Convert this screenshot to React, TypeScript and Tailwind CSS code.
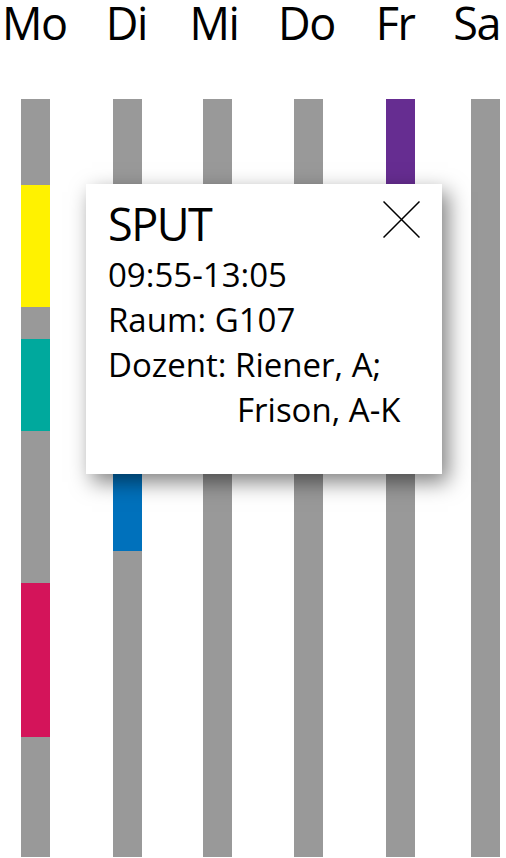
import React from "react";

type Seg = { top: number; height: number; color: string };
type Day = { ml: string; segs: Seg[] };

const labels = [
  { t: "Mo", ml: "ml-[2px]" },
  { t: "Di", ml: "ml-[35px]" },
  { t: "Mi", ml: "ml-[29px]" },
  { t: "Do", ml: "ml-[34px]" },
  { t: "Fr", ml: "ml-[30px]" },
  { t: "Sa", ml: "ml-[23px]" },
];

const days: Day[] = [
  {
    ml: "ml-[21px]",
    segs: [
      { top: 86, height: 122, color: "#FFF200" },
      { top: 240, height: 92, color: "#00A99D" },
      { top: 484, height: 154, color: "#D4145A" },
    ],
  },
  { ml: "ml-[63px]", segs: [{ top: 160, height: 292, color: "#0071BC" }] },
  { ml: "ml-[61px]", segs: [] },
  { ml: "ml-[62px]", segs: [] },
  { ml: "ml-[63px]", segs: [{ top: 0, height: 86, color: "#662D91" }] },
  { ml: "ml-[56px]", segs: [] },
];

export default function App() {
  return (
    <div
      className="relative w-[506px] h-[858px] bg-white overflow-hidden text-black"
      style={{ fontFamily: '"Open Sans", "Noto Sans", sans-serif' }}
    >
      <div className="flex h-[46px]">
        {labels.map((l) => (
          <div
            key={l.t}
            className={`${l.ml} w-[60px] text-center whitespace-nowrap text-[45px] leading-[46px] tracking-[-1.5px]`}
          >
            {l.t}
          </div>
        ))}
      </div>
      <div className="flex mt-[53px]">
        {days.map((d, idx) => (
          <div key={idx} className={`${d.ml} relative w-[29px] h-[758px] bg-[#999999]`}>
            {d.segs.map((s, i) => (
              <div
                key={i}
                className="absolute left-0 w-full"
                style={{ top: s.top, height: s.height, background: s.color }}
              />
            ))}
          </div>
        ))}
      </div>

      <div className="absolute left-[86px] top-[184px] w-[356px] h-[290px] bg-white shadow-[6px_8px_20px_rgba(0,0,0,0.5)] pl-[22px] pt-[15px]">
        <div className="text-[45px] leading-[50px] tracking-[-1.5px]">SPUT</div>
        <div className="mt-[3px] text-[33px] leading-[45px]">
          <div>09:55-13:05</div>
          <div>Raum: G107</div>
          <div className="flex">
            <span className="whitespace-pre">Dozent: </span>
            <div className="flex flex-col">
              <span>Riener, A;</span>
              <span className="pl-[2px]">Frison, A-K</span>
            </div>
          </div>
        </div>
        <svg
          className="absolute left-[297px] top-[17px]"
          width="37"
          height="37"
          viewBox="0 0 37 37"
        >
          <path d="M0.5 0.5 L36.5 36.5 M36.5 0.5 L0.5 36.5" stroke="#000" strokeWidth="1.5" />
        </svg>
      </div>
    </div>
  );
}
